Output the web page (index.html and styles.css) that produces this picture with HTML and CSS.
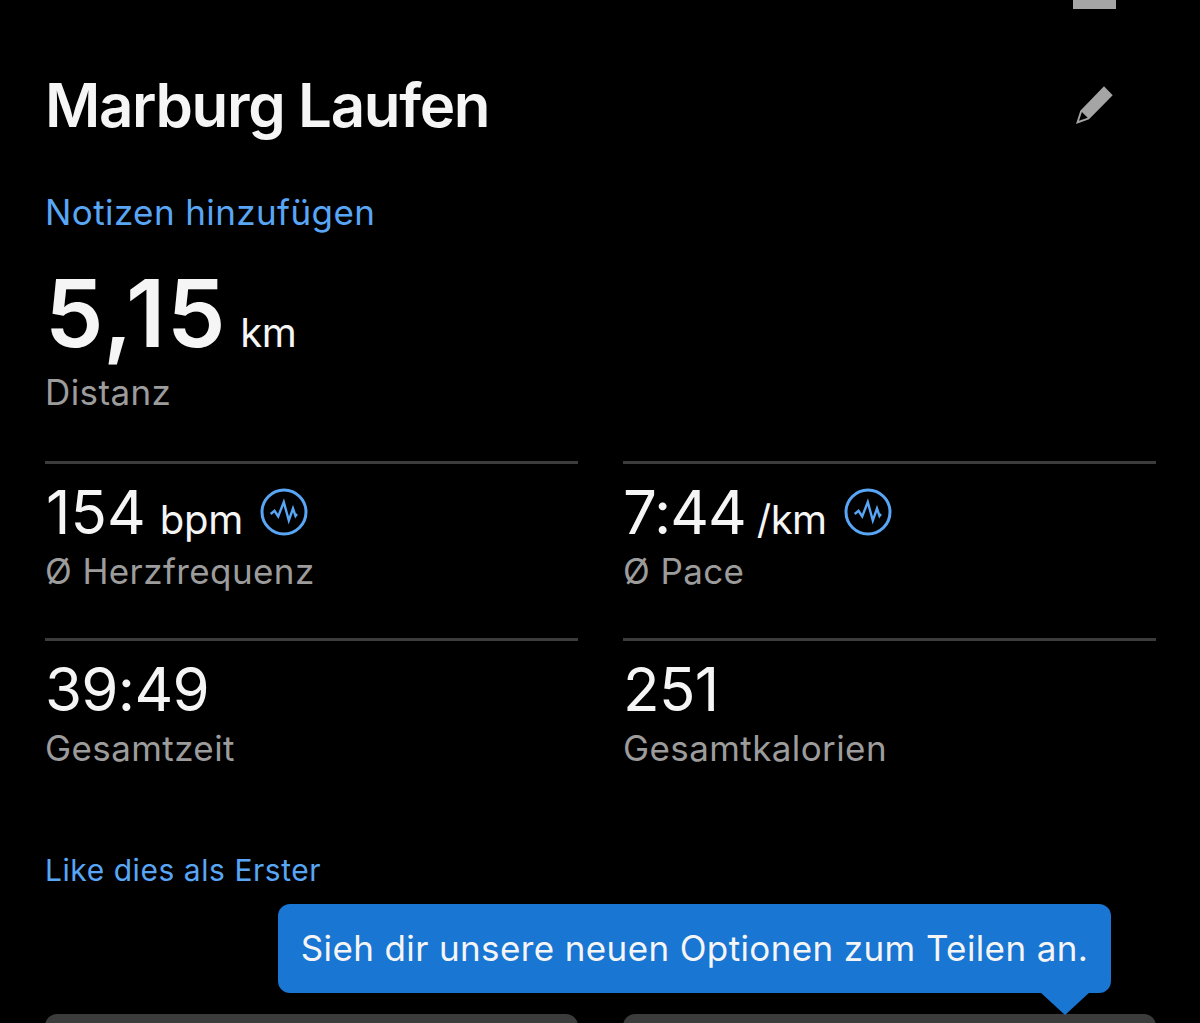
FILE: index.html
```html
<!DOCTYPE html>
<html lang="de">
<head>
    <meta charset="UTF-8">
    <meta name="viewport" content="width=device-width, initial-scale=1.0">
    <title>Marburg Laufen</title>
    <link rel="stylesheet" href="styles.css">
</head>
<body>
    <div class="topbar"><span class="handle"></span></div>
    <main class="activity">
        <header class="header">
            <h1>Marburg Laufen</h1>
            <svg class="edit" viewBox="0 0 40 40">
                <path fill="#a5a5a5" fill-rule="evenodd" d="M29 1.3 37.7 10.3 14 34.3 1 39 5.3 25.7ZM6.9 26.9 4 35.8 12.7 32.7Z"/>
            </svg>
        </header>
        <a class="notes">Notizen hinzufügen</a>
        <section class="distance">
            <div class="main-value"><b>5,15</b><span class="unit">km</span></div>
            <div class="label">Distanz</div>
        </section>
        <section class="stats">
            <div class="stat">
                <div class="value"><span class="num heart">154</span><span class="unit">bpm</span>
                    <svg class="pulse" viewBox="0 0 48 48"><circle cx="24" cy="24" r="22"/><path d="M10.7 26 14.5 22.8 18.2 28.5 23.8 14 28.8 32.5 33 20.5 35.5 28 37 26"/></svg>
                </div>
                <div class="label">Ø Herzfrequenz</div>
            </div>
            <div class="stat">
                <div class="value"><span class="num">7:44</span><span class="unit pace">/km</span>
                    <svg class="pulse" viewBox="0 0 48 48"><circle cx="24" cy="24" r="22"/><path d="M10.7 26 14.5 22.8 18.2 28.5 23.8 14 28.8 32.5 33 20.5 35.5 28 37 26"/></svg>
                </div>
                <div class="label">Ø Pace</div>
            </div>
            <div class="stat">
                <div class="value"><span class="num total">39:49</span></div>
                <div class="label">Gesamtzeit</div>
            </div>
            <div class="stat">
                <div class="value"><span class="num total">251</span></div>
                <div class="label">Gesamtkalorien</div>
            </div>
        </section>
        <a class="like">Like dies als Erster</a>
        <div class="tooltip">Sieh dir unsere neuen Optionen zum Teilen an.</div>
        <div class="buttons"><span></span><span></span></div>
    </main>
</body>
</html>
```

FILE: styles.css
```css
* {
    box-sizing: border-box;
}
body {
    margin: 0;
    height: 1023px;
    overflow: hidden;
    background: #000;
    color: #f5f5f5;
    font-family: Inter, sans-serif;
}
.topbar {
    display: flex;
    justify-content: flex-end;
    height: 72px;
    padding-right: 84px;
}
.handle {
    width: 43px;
    height: 9px;
    background: #a5a5a5;
}
.activity {
    padding: 0 44px 0 45px;
}
.header {
    display: flex;
    justify-content: space-between;
    height: 110px;
    padding-right: 41px;
}
h1 {
    margin: 0;
    font-size: 60px;
    font-weight: 600;
    line-height: 67px;
    letter-spacing: -1.35px;
}
.edit {
    width: 40px;
    height: 40px;
    margin-top: 13px;
}
.notes {
    display: block;
    height: 82px;
    line-height: 60px;
    font-size: 35px;
    letter-spacing: 0.4px;
    color: #58a6f5;
}
.distance {
    height: 197px;
}
.main-value {
    display: flex;
    align-items: baseline;
    height: 104px;
    line-height: 98px;
}
.main-value b {
    font-size: 93px;
    font-weight: 600;
    letter-spacing: 1.7px;
}
.main-value .unit {
    margin-left: 13px;
}
.unit {
    margin-left: 16px;
    font-size: 40px;
    letter-spacing: -0.5px;
}
.label {
    line-height: 49px;
    font-size: 35px;
    letter-spacing: 0.4px;
    color: #9c9c9c;
}
.stats {
    display: grid;
    grid-template-columns: 1fr 1fr;
    grid-template-rows: 177px 177px;
    column-gap: 45px;
}
.stat {
    border-top: 3px solid #3c3c3c;
    padding-top: 16px;
}
.value {
    display: flex;
    align-items: baseline;
    height: 67px;
    line-height: 65px;
}
.num {
    font-size: 60px;
    letter-spacing: -1px;
}
.heart {
    padding-left: 1px;
    letter-spacing: 0;
}
.total {
    letter-spacing: -0.7px;
}
.heart + .unit {
    margin-left: 14px;
    letter-spacing: -0.2px;
}
.pace {
    margin-left: 11px;
}
.pulse {
    align-self: flex-start;
    width: 48px;
    height: 48px;
    margin: 8px 0 0 17px;
    fill: none;
    stroke: #58a6f5;
    stroke-width: 3;
}
.pulse path {
    stroke-width: 2.4;
}
.like {
    display: block;
    height: 89px;
    padding-top: 35px;
    line-height: 40px;
    font-size: 30px;
    letter-spacing: 0.55px;
    color: #58a6f5;
}
.tooltip {
    position: relative;
    width: 833px;
    height: 89px;
    margin-left: 233px;
    border-radius: 12px;
    background: #1976d2;
    line-height: 89px;
    font-size: 35px;
    letter-spacing: 0.38px;
    text-align: center;
    white-space: nowrap;
}
.tooltip::after {
    content: "";
    position: absolute;
    left: 762px;
    top: 88px;
    border: 25px solid transparent;
    border-top: 23px solid #1976d2;
    border-bottom: 0;
}
.buttons {
    display: grid;
    grid-template-columns: 1fr 1fr;
    column-gap: 45px;
    padding-top: 21px;
}
.buttons span {
    height: 30px;
    border-radius: 12px;
    background: #3c3c3c;
}
```
